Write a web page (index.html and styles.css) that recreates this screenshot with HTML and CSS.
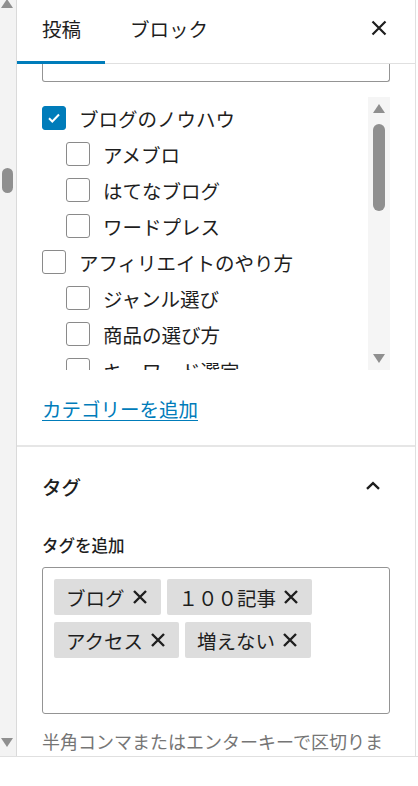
FILE: index.html
```html
<!DOCTYPE html>
<html lang="ja">
  <head>
    <meta charset="UTF-8" />
    <title>投稿設定</title>
    <link rel="stylesheet" href="styles.css">
  </head>
  <body>
    <div class="frame">
      <div class="page-scroll">
        <span class="arrow-up"></span>
        <span class="page-thumb"></span>
        <span class="arrow-down"></span>
      </div>

      <div class="sidebar">
        <div class="tabs">
          <button class="tab active">投稿</button>
          <button class="tab">ブロック</button>
          <button class="close-btn" aria-label="閉じる">
            <svg width="24" height="24" viewBox="0 0 24 24">
              <path d="M5.5 5.5l13 13M18.5 5.5l-13 13" stroke="#1e1e1e" stroke-width="2.2" fill="none" />
            </svg>
          </button>
        </div>

        <div class="panel categories">
          <div class="search-stub"></div>

          <div class="cat-box">
            <ul class="cat-list">
              <li class="cat-item">
                <span class="checkbox checked">
                  <svg width="20" height="20" viewBox="0 0 20 20">
                    <path d="M5 10.3l3.3 3.2 6.7-7" stroke="#fff" stroke-width="2" fill="none" />
                  </svg>
                </span>
                <span>ブログのノウハウ</span>
              </li>
              <li class="cat-item child"><span class="checkbox"></span><span>アメブロ</span></li>
              <li class="cat-item child"><span class="checkbox"></span><span>はてなブログ</span></li>
              <li class="cat-item child"><span class="checkbox"></span><span>ワードプレス</span></li>
              <li class="cat-item"><span class="checkbox"></span><span>アフィリエイトのやり方</span></li>
              <li class="cat-item child"><span class="checkbox"></span><span>ジャンル選び</span></li>
              <li class="cat-item child"><span class="checkbox"></span><span>商品の選び方</span></li>
              <li class="cat-item child"><span class="checkbox"></span><span>キーワード選定</span></li>
            </ul>
            <div class="list-scroll">
              <span class="arrow-up"></span>
              <span class="list-thumb"></span>
              <span class="spacer"></span>
              <span class="arrow-down"></span>
            </div>
          </div>

          <a class="add-link" href="#">カテゴリーを追加</a>
        </div>

        <div class="panel tags">
          <div class="panel-title">
            <span>タグ</span>
            <svg width="24" height="24" viewBox="0 0 24 24">
              <path d="M6 14.8l6-5.6 6 5.6" stroke="#1e1e1e" stroke-width="2.4" fill="none" />
            </svg>
          </div>

          <div class="tag-label">タグを追加</div>

          <div class="token-box">
            <span class="token">ブログ<span class="token-x"><svg width="16" height="16" viewBox="0 0 16 16"><path d="M2 2l12 12M14 2L2 14" stroke="#1e1e1e" stroke-width="2.4" fill="none" /></svg></span></span>
            <span class="token">１００記事<span class="token-x"><svg width="16" height="16" viewBox="0 0 16 16"><path d="M2 2l12 12M14 2L2 14" stroke="#1e1e1e" stroke-width="2.4" fill="none" /></svg></span></span>
            <span class="token">アクセス<span class="token-x"><svg width="16" height="16" viewBox="0 0 16 16"><path d="M2 2l12 12M14 2L2 14" stroke="#1e1e1e" stroke-width="2.4" fill="none" /></svg></span></span>
            <span class="token">増えない<span class="token-x"><svg width="16" height="16" viewBox="0 0 16 16"><path d="M2 2l12 12M14 2L2 14" stroke="#1e1e1e" stroke-width="2.4" fill="none" /></svg></span></span>
          </div>

          <p class="help">半角コンマまたはエンターキーで区切ります。</p>
        </div>
      </div>

      <div class="edge"></div>
    </div>
  </body>
</html>
```

FILE: styles.css
```css
* {
  margin: 0;
  padding: 0;
  box-sizing: border-box;
}

body {
  font-family: "Noto Sans CJK JP", "Noto Sans", sans-serif;
  color: #1e1e1e;
  background: #fff;
}

.frame {
  display: flex;
  height: 757px;
  border-bottom: 1px solid #e0e0e0;
  overflow: hidden;
}

/* outer page scrollbar */
.page-scroll {
  width: 17px;
  flex-shrink: 0;
  background: #f3f3f3;
  border-right: 1px solid #dadada;
  display: flex;
  flex-direction: column;
  align-items: center;
  padding-right: 2px;
}

.arrow-up,
.arrow-down {
  width: 0;
  height: 0;
  border-left: 6px solid transparent;
  border-right: 6px solid transparent;
}

.arrow-up {
  border-bottom: 9px solid #8f8f8f;
}

.arrow-down {
  border-top: 9px solid #8f8f8f;
}

.page-scroll .arrow-up {
  margin-top: -1px;
}

.page-thumb {
  width: 11px;
  height: 25px;
  border-radius: 6px;
  background: #8f8f8f;
  margin-top: 160px;
  margin-bottom: auto;
}

.page-scroll .arrow-down {
  margin-bottom: 9px;
}

.sidebar {
  flex: 1;
  min-width: 0;
  border-right: 1px solid #e0e0e0;
}

.edge {
  width: 2px;
  flex-shrink: 0;
}

/* tabs */
.tabs {
  display: flex;
  align-items: center;
  height: 64px;
  border-bottom: 1px solid #e0e0e0;
}

.tab {
  background: none;
  border: none;
  font-family: inherit;
  font-size: 19.5px;
  color: #1e1e1e;
  height: 64px;
  padding: 0 24px 7px 25px;
  cursor: pointer;
}

.tab.active {
  box-shadow: inset 0 -3px 0 #007cba;
}

.close-btn {
  margin-left: auto;
  margin-right: 24px;
  margin-bottom: 7px;
  background: none;
  border: none;
  width: 24px;
  height: 24px;
}

/* panels */
.panel {
  padding: 0 25px;
}

.categories {
  padding-bottom: 22px;
  border-bottom: 2px solid #e6e6e6;
}

.search-stub {
  height: 18px;
  border: 1px solid #949494;
  border-top: none;
  border-radius: 0 0 3px 3px;
}

.cat-box {
  display: flex;
  height: 273px;
  margin-top: 15px;
}

.cat-list {
  flex: 1;
  list-style: none;
  overflow: hidden;
  padding-top: 9px;
}

.cat-item {
  display: flex;
  align-items: center;
  gap: 13px;
  height: 24px;
  margin-bottom: 12px;
  font-size: 19.5px;
  white-space: nowrap;
}

.cat-item.child {
  padding-left: 24px;
}

.checkbox {
  width: 24px;
  height: 24px;
  flex-shrink: 0;
  border: 1px solid #8a8a8a;
  border-radius: 3px;
  background: #fff;
  display: flex;
  align-items: center;
  justify-content: center;
}

.checkbox.checked {
  background: #007cba;
  border-color: #007cba;
}

.list-scroll {
  width: 22px;
  background: #f5f5f5;
  display: flex;
  flex-direction: column;
  align-items: center;
  padding: 7px 0 7px;
}

.list-thumb {
  width: 12px;
  height: 87px;
  border-radius: 6px;
  background: #8f8f8f;
  margin-top: 11px;
}

.spacer {
  flex: 1;
}

.add-link {
  display: inline-block;
  margin-top: 25px;
  font-size: 19.5px;
  line-height: 28px;
  color: #007cba;
  text-decoration: underline;
  text-underline-offset: 3px;
}

/* tags */
.panel-title {
  display: flex;
  justify-content: space-between;
  align-items: center;
  padding-top: 25px;
  height: 53px;
  font-size: 19.5px;
  font-weight: 500;
}

.panel-title svg {
  margin-right: 5px;
}

.tag-label {
  margin-top: 33px;
  font-size: 16.5px;
  line-height: 24px;
  font-weight: 500;
}

.token-box {
  margin-top: 10px;
  height: 147px;
  border: 1px solid #949494;
  border-radius: 3px;
  padding: 11px;
  display: flex;
  flex-wrap: wrap;
  align-content: flex-start;
  gap: 7px 6px;
}

.token {
  display: inline-flex;
  align-items: center;
  height: 36px;
  padding: 0 6px 0 12px;
  background: #ddd;
  border-radius: 2px;
  font-size: 19.5px;
  white-space: nowrap;
}

.token-x {
  width: 30px;
  height: 36px;
  display: flex;
  align-items: center;
  justify-content: center;
}

.help {
  margin-top: 14px;
  font-size: 18px;
  line-height: 26px;
  color: #757575;
}
```
